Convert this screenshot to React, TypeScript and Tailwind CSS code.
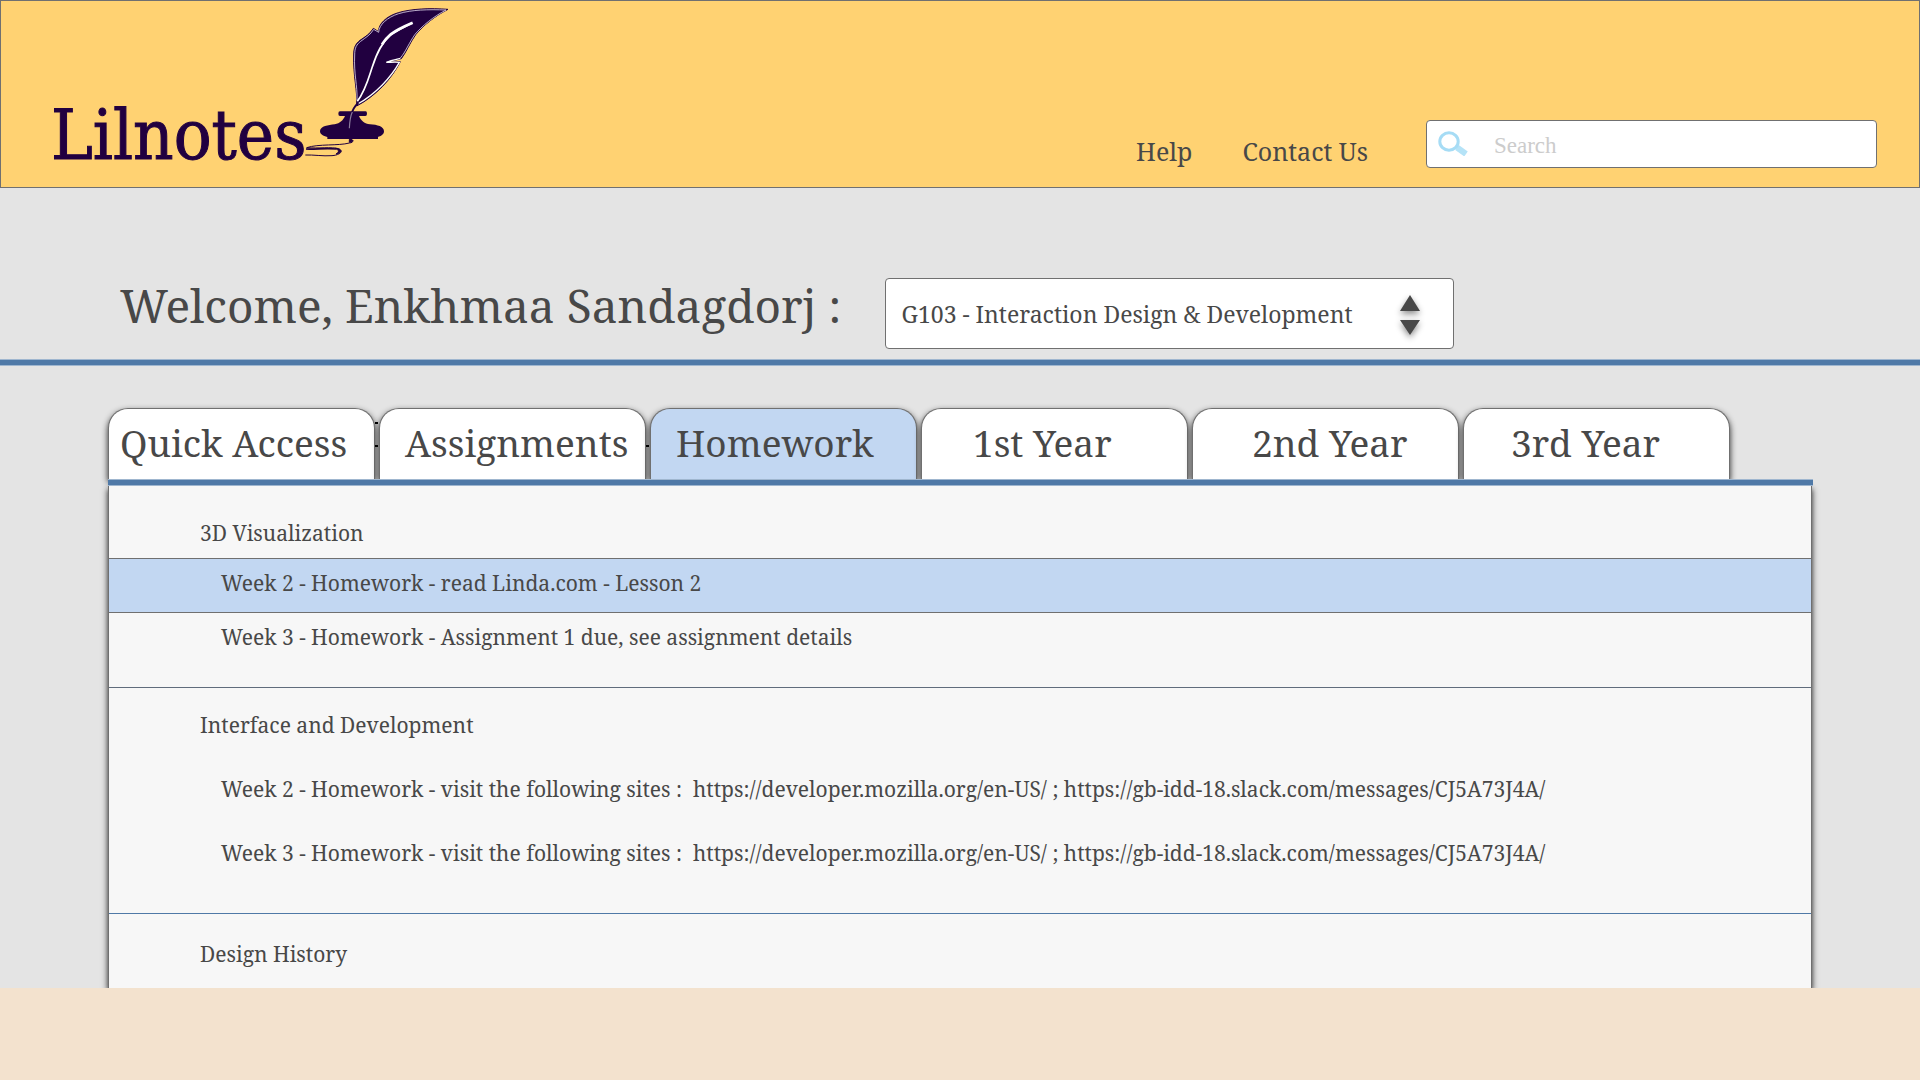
import { useState } from "react";

const tabs = [
  { label: "Quick Access", inset: "pl-[11px]" },
  { label: "Assignments", inset: "pl-[25px]" },
  { label: "Homework", inset: "pl-[25px]" },
  { label: "1st Year", inset: "pl-[51px]" },
  { label: "2nd Year", inset: "pl-[59px]" },
  { label: "3rd Year", inset: "pl-[47px]" },
];

function QuillIcon() {
  return (
    <svg viewBox="0 0 510 510" className="-ml-[15px] h-[170px] w-[170px] shrink-0" aria-hidden="true">
      {/* feather */}
      <path
        d="M200 318 C203 270 189 230 191 165 C191 140 198 131 210 121 C226 110 240 102 250 85 L266 95 C264 72 290 48 325 38 C365 26 420 24 474 28 C435 48 400 76 377 104 C360 128 348 158 334 176 L290 187 L331 185 C306 235 258 288 200 318 Z"
        fill="#210040"
        stroke="#210040"
        strokeWidth="3"
      />
      <path
        d="M201 300 C203 258 191 222 194 165 C194 142 200 134 212 124 C228 112 242 104 251 88 L266 97 C267 74 292 52 326 41 C366 29 415 28 468 30 C430 50 396 78 375 103 C358 127 346 157 331 174"
        fill="none"
        stroke="#d9cfe4"
        strokeWidth="2.5"
      />
      <path d="M331 175 C318 178 302 181 289 187 C302 187 316 186 328 187 C303 232 258 281 203 312" fill="none" stroke="#fff" strokeWidth="4" />
      <path d="M202 304 C226 272 234 240 246 203 C262 154 276 128 300 107 C320 92 342 82 366 69" fill="none" stroke="#fff" strokeWidth="5" />
      <path d="M276 133 C284 120 290 113 303 102 C322 88 342 79 368 68" fill="none" stroke="#fff" strokeWidth="8" />
      {/* inkwell */}
      <path
        d="M150 334 H227 Q231 334 231 341 Q231 348 226 348 H207 C213 362 224 372 240 373 C262 374 282 380 282 394 C282 404 272 409 264 411 V417 H112 V411 C99 408 90 403 90 393 C91 378 115 376 134 373 C150 370 160 360 165 348 H150 Q145 348 145 341 Q145 334 150 334 Z"
        fill="#210040"
      />
      <path d="M205 308 C191 322 186 333 184 345" fill="none" stroke="#210040" strokeWidth="6" />
      <path d="M187 336 C180 350 179 366 178 385" fill="none" stroke="#8c7c9d" strokeWidth="3.5" />
      {/* ink flourish */}
      <path
        d="M181 417 C194 420 190 428 178 429 C145 438 86 431 50 443 C84 446 125 440 146 446 C162 453 151 465 126 467 C98 469 70 464 46 465"
        fill="none"
        stroke="#210040"
        strokeWidth="3"
      />
      <path d="M178 418 C190 418 192 426 178 427 Z M136 445 C158 447 158 459 138 462 C148 457 148 450 136 445 Z" fill="#210040" stroke="#210040" strokeWidth="3" />
      <path d="M48 447 C80 448 110 444 140 447" fill="none" stroke="#210040" strokeWidth="5" />
    </svg>
  );
}

function Header() {
  return (
    <header className="flex h-[188px] items-end justify-between border border-[#707070] bg-[#ffd272] pr-[42px] pl-[50px]">
      <a href="#" className="mb-[17px] flex items-end text-[#210040]">
        <span className="w-[254px] font-['DejaVu_Serif_Condensed','Noto_Serif',serif] text-[70px] leading-[70px] whitespace-nowrap [-webkit-text-stroke:1px_#210040]">
          Lilnotes
        </span>
        <QuillIcon />
      </a>
      <div className="mb-[19px] flex items-end">
        <nav className="mr-[58px] flex gap-[50px] text-[25px] leading-[34px]">
          <a href="#help">Help</a>
          <a href="#contact">Contact Us</a>
        </nav>
        <form role="search" className="relative">
          <input
            type="search"
            aria-label="Search"
            placeholder="Search"
            className="block h-12 w-[451px] rounded-[4px] border border-[#707070] bg-white pt-[3px] pl-[67px] font-['Liberation_Serif',serif] text-[23px] placeholder:text-[#cccccc]"
          />
          <svg viewBox="0 0 30 25" className="pointer-events-none absolute top-[11px] left-3 h-[25px] w-[30px]" aria-hidden="true">
            <path d="M19 16.5 L28 23" stroke="#b5e3f7" strokeWidth="6" />
            <ellipse cx="11" cy="10.5" rx="9.2" ry="8.7" fill="none" stroke="#a6dcf5" strokeWidth="3" />
          </svg>
        </form>
      </div>
    </header>
  );
}

function Rule() {
  return <div className="h-[7px] border-y border-[#9fb6cf] bg-[#4f79a7]" />;
}

function WelcomeBar() {
  return (
    <div className="flex h-[171px] items-end pb-[10px] pl-[120px]">
      <h1 className="mb-3 text-[46px] leading-[64px] whitespace-nowrap">Welcome, Enkhmaa Sandagdorj :</h1>
      <div className="relative ml-[43px]">
        <select
          aria-label="Course"
          className="block h-[71px] w-[569px] appearance-none rounded-[4px] border border-[#707070] bg-white pt-[2px] pl-4 text-[23px]"
        >
          <option>G103 - Interaction Design &amp; Development</option>
        </select>
        <svg
          viewBox="0 0 20 41"
          className="pointer-events-none absolute top-[17px] right-[34px] h-[41px] w-5 overflow-visible drop-shadow-[0_3px_3px_rgba(0,0,0,0.45)]"
          aria-hidden="true"
        >
          <path d="M10 0 L20 16 H0 Z M0 25 H20 L10 40 Z" fill="#484848" />
        </svg>
      </div>
    </div>
  );
}

function Sites() {
  return (
    <>
      {"visit the following sites :  "}
      <a href="https://developer.mozilla.org/en-US/">https://developer.mozilla.org/en-US/</a>
      {" ; "}
      <a href="https://gb-idd-18.slack.com/messages/CJ5A73J4A/">https://gb-idd-18.slack.com/messages/CJ5A73J4A/</a>
    </>
  );
}

export default function App() {
  const [active, setActive] = useState("Homework");
  return (
    <div className="min-h-screen bg-[#f3e2ce] font-['Noto_Serif',serif] text-[#484848]">
      <div className="overflow-hidden bg-[#e4e4e4]">
        <Header />
        <WelcomeBar />
        <Rule />
        <main className="mx-[108px] mt-[42px]">
          <div role="tablist" className="relative grid grid-cols-6 gap-1 pr-[82px]">
            {tabs.map((tab, i) => (
              <button
                key={tab.label}
                type="button"
                role="tab"
                aria-selected={tab.label === active}
                onClick={() => setActive(tab.label)}
                className={`relative rounded-t-[20px] border border-b-0 border-[#707070] pt-[9px] pb-[11px] text-left text-[37px] leading-[50px] whitespace-nowrap shadow-[0_3px_6px_rgba(0,0,0,0.85)] ${tab.inset} ${
                  tab.label === active ? "bg-[#c2d7f2]" : "bg-white"
                }`}
              >
                {tab.label}
                {i === 0 && <span className="absolute top-[13px] -right-1 h-[2px] w-[3px] bg-black" />}
                {i < 2 && <span className="absolute top-9 -right-1 h-[2px] w-[3px] bg-black" />}
              </button>
            ))}
          </div>
          <div className="relative z-10 -mr-px">
            <Rule />
          </div>
          <section
            role="tabpanel"
            className="relative border-x border-[#707070] bg-[#f7f7f7] text-[21px] leading-[28px] whitespace-pre-wrap shadow-[0_3px_6px_rgba(0,0,0,0.9)]"
          >
            <div className="border-b border-[#606c7c] pt-[33px] pb-9">
              <h2 className="pb-[11px] pl-[91px]">3D Visualization</h2>
              <p className="-mx-px border border-[#707070] bg-[#c2d7f2] pt-[10px] pb-[15px] pl-[112px]">
                Week 2 - Homework - read Linda.com - Lesson 2
              </p>
              <p className="pt-[10px] pl-[112px]">Week 3 - Homework - Assignment 1 due, see assignment details</p>
            </div>
            <div className="flex flex-col gap-9 border-b border-[#4f79a7] pt-[23px] pb-[46px]">
              <h2 className="pl-[91px]">Interface and Development</h2>
              <p className="pl-[112px]">
                {"Week 2 - Homework - "}
                <Sites />
              </p>
              <p className="pl-[112px]">
                {"Week 3 - Homework - "}
                <Sites />
              </p>
            </div>
            <h2 className="pt-[26px] pb-5 pl-[91px]">Design History</h2>
          </section>
        </main>
      </div>
    </div>
  );
}
